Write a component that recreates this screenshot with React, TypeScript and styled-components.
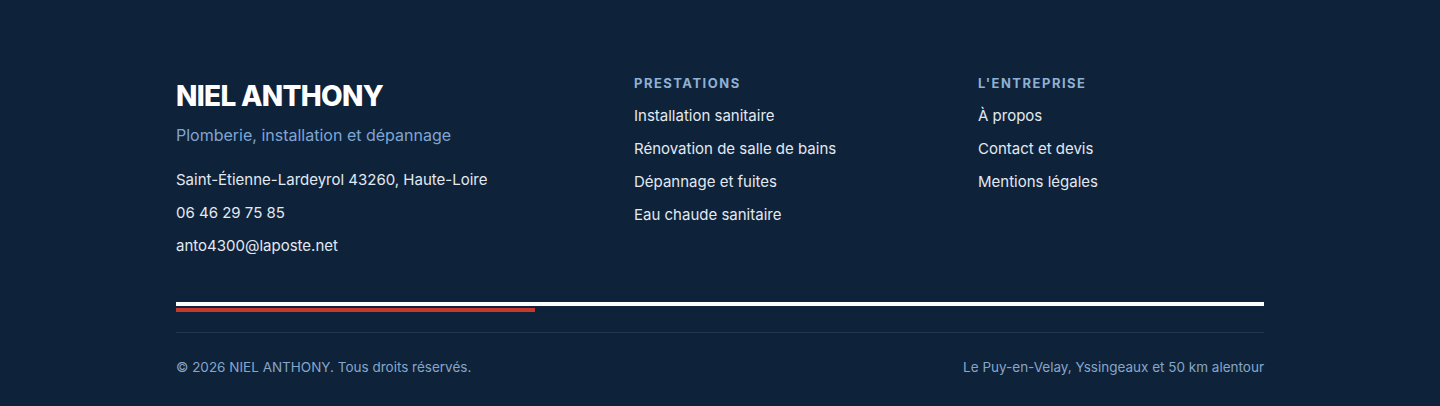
import React from "react";
import styled, { createGlobalStyle } from "styled-components";

const GlobalStyle = createGlobalStyle`
  html, body {
    margin: 0;
    padding: 0;
    background: #0e2239;
  }
  body {
    font-family: Inter, "Noto Sans", "Liberation Sans", sans-serif;
    -webkit-font-smoothing: antialiased;
  }
  * { box-sizing: border-box; }
`;

const Footer = styled.footer`
  background: #0e2239;
  color: #e2e9f2;
  padding: 73px 0 29px;
`;

const Container = styled.div`
  width: 1088px;
  margin: 0 auto;
`;

const Columns = styled.div`
  display: grid;
  grid-template-columns: 410px 296px 1fr;
  column-gap: 48px;
  align-items: start;
`;

const Brand = styled.div`
  display: flex;
  flex-direction: column;
`;

const BrandName = styled.h2`
  margin: 6px 0 0;
  font-size: 28px;
  line-height: 34px;
  font-weight: 800;
  letter-spacing: -0.025em;
  color: #ffffff;
`;

const Tagline = styled.p`
  margin: 10px 0 22px;
  font-size: 16px;
  line-height: 24px;
  color: #7fa6d3;
`;

const InfoList = styled.div`
  display: flex;
  flex-direction: column;
  gap: 11px;
`;

const InfoLine = styled.span`
  font-size: 15px;
  line-height: 22px;
  color: #e2e9f2;
`;

const Column = styled.nav`
  display: flex;
  flex-direction: column;
`;

const ColumnTitle = styled.h3`
  margin: 0 0 12px;
  font-size: 13px;
  line-height: 20px;
  font-weight: 700;
  letter-spacing: 0.115em;
  text-transform: uppercase;
  color: #8eb0d4;
`;

const LinkList = styled.ul`
  list-style: none;
  margin: 0;
  padding: 0;
  display: flex;
  flex-direction: column;
  gap: 11px;
`;

const LinkItem = styled.li`
  font-size: 15px;
  line-height: 22px;
  color: #e2e9f2;
`;

const Stripes = styled.div`
  margin-top: 45px;
  display: flex;
  flex-direction: column;
  gap: 2px;
`;

const Stripe = styled.div<{ $color: string; $width: string }>`
  height: 4px;
  width: ${(p) => p.$width};
  background: ${(p) => p.$color};
`;

const Divider = styled.hr`
  margin: 20px 0 0;
  border: 0;
  height: 1px;
  background: #22384f;
`;

const BottomBar = styled.div`
  display: flex;
  justify-content: space-between;
  align-items: center;
  padding-top: 24px;
`;

const SmallPrint = styled.span`
  font-size: 13.5px;
  line-height: 20px;
  color: #86a6c9;
`;

const services = [
  "Installation sanitaire",
  "Rénovation de salle de bains",
  "Dépannage et fuites",
  "Eau chaude sanitaire",
];

const company = ["À propos", "Contact et devis", "Mentions légales"];

export default function App() {
  return (
    <>
      <GlobalStyle />
      <Footer>
        <Container>
          <Columns>
            <Brand>
              <BrandName>NIEL ANTHONY</BrandName>
              <Tagline>Plomberie, installation et dépannage</Tagline>
              <InfoList>
                <InfoLine>Saint-Étienne-Lardeyrol 43260, Haute-Loire</InfoLine>
                <InfoLine>06 46 29 75 85</InfoLine>
                <InfoLine>anto4300@laposte.net</InfoLine>
              </InfoList>
            </Brand>
            <Column>
              <ColumnTitle>Prestations</ColumnTitle>
              <LinkList>
                {services.map((s) => (
                  <LinkItem key={s}>{s}</LinkItem>
                ))}
              </LinkList>
            </Column>
            <Column>
              <ColumnTitle>L'entreprise</ColumnTitle>
              <LinkList>
                {company.map((s) => (
                  <LinkItem key={s}>{s}</LinkItem>
                ))}
              </LinkList>
            </Column>
          </Columns>
          <Stripes>
            <Stripe $color="#ffffff" $width="100%" />
            <Stripe $color="#c8382f" $width="33%" />
          </Stripes>
          <Divider />
          <BottomBar>
            <SmallPrint>© 2026 NIEL ANTHONY. Tous droits réservés.</SmallPrint>
            <SmallPrint>Le Puy-en-Velay, Yssingeaux et 50 km alentour</SmallPrint>
          </BottomBar>
        </Container>
      </Footer>
    </>
  );
}
